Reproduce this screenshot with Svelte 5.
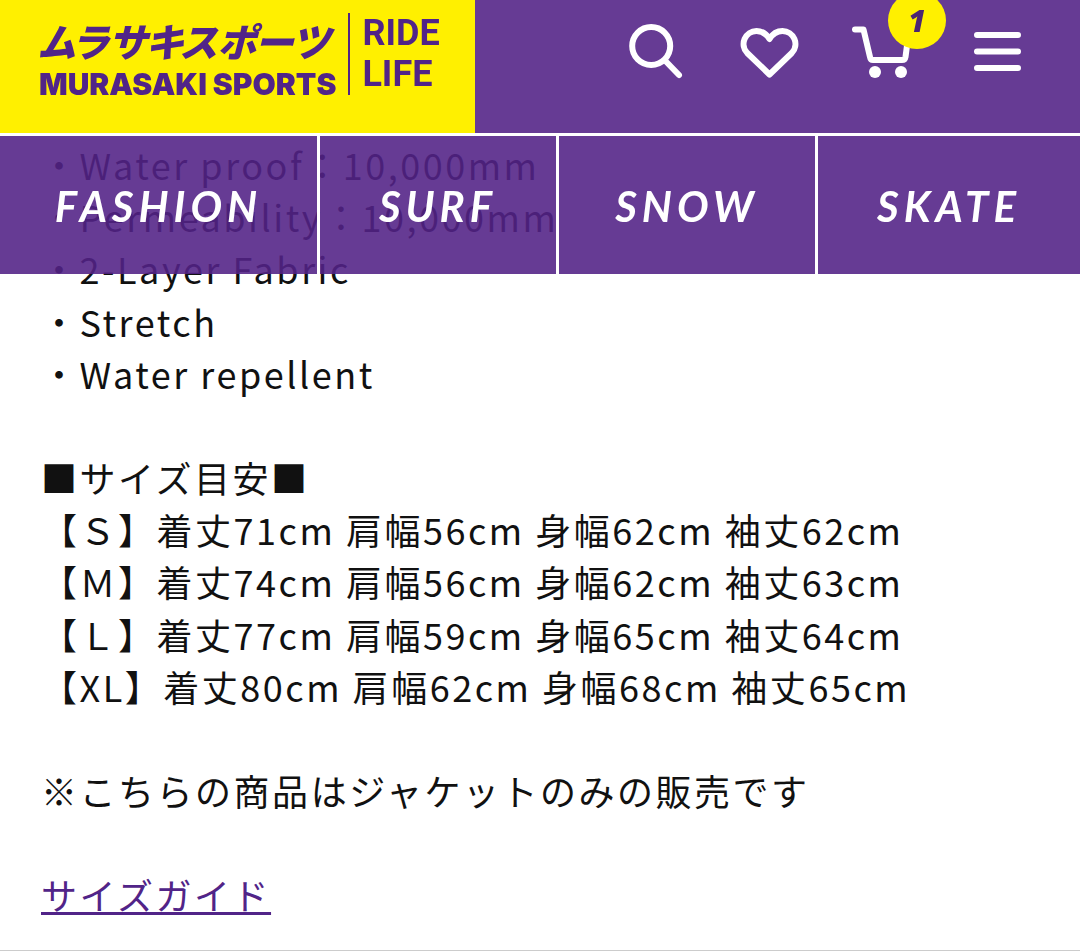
<script>
  const categories = ['FASHION', 'SURF', 'SNOW', 'SKATE'];
  const features = [
    'Water proof：10,000mm',
    'Permeability：10,000mm',
    '2-Layer Fabric',
    'Stretch',
    'Water repellent'
  ];
  const sizes = [
    '【Ｓ】着丈71cm 肩幅56cm 身幅62cm 袖丈62cm',
    '【Ｍ】着丈74cm 肩幅56cm 身幅62cm 袖丈63cm',
    '【Ｌ】着丈77cm 肩幅59cm 身幅65cm 袖丈64cm',
    '【XL】着丈80cm 肩幅62cm 身幅68cm 袖丈65cm'
  ];
  const cartCount = 1;
</script>

<header>
  <div class="bar">
    <a class="logo" href="#home">
      <span class="brand">
        <span class="kana">ムラサキスポーツ</span>
        <span class="latin">MURASAKI SPORTS</span>
      </span>
      <span class="slogan"><span>RIDE</span><span>LIFE</span></span>
    </a>
    <div class="tools">
      <button type="button" aria-label="Search">
        <svg viewBox="0 0 60 60"><circle cx="25.2" cy="24" r="19" /><path d="M39 38.500L53 53" /></svg>
      </button>
      <button type="button" aria-label="Favorites">
        <svg viewBox="0 0 60 60"><path d="M29.500 17C26.500 12 21.500 9 16.500 9A13 13 0 0 0 7.200 31L29.500 52.500L51.800 31A13 13 0 0 0 42.500 9C37.500 9 32.500 12 29.500 17Z" /></svg>
      </button>
      <button type="button" aria-label="Cart">
        <svg viewBox="0 0 60 60">
          <path d="M1 7.500H9.500L16 35Q16.500 38 19 38H48Q51 38 51.500 35L54 16" />
          <circle class="solid" cx="21" cy="50" r="6" /><circle class="solid" cx="47" cy="50" r="6" />
        </svg>
        <span class="badge">{cartCount}</span>
      </button>
      <button type="button" aria-label="Menu">
        <svg viewBox="0 0 60 60"><path d="M9 13H50M9 29.500H50M9 46H50" /></svg>
      </button>
    </div>
  </div>
  <nav>
    {#each categories as category}
      <a href="#{category.toLowerCase()}">{category}</a>
    {/each}
  </nav>
</header>

<main>
  <ul>
    {#each features as feature}
      <li>・{feature}</li>
    {/each}
  </ul>
  <section>
    <h2>■サイズ目安■</h2>
    {#each sizes as size}
      <p>{size}</p>
    {/each}
  </section>
  <p>※こちらの商品はジャケットのみの販売です</p>
  <p><a href="#size-guide">サイズガイド</a></p>
</main>

<style>
  :global(body) {
    margin: 0;
    background: #fff;
  }
  header {
    position: fixed;
    inset: 0 0 auto;
    z-index: 1;
  }
  .bar {
    display: flex;
    justify-content: space-between;
    height: 133px;
    background: #663b94;
    border-bottom: 3px solid #fff;
  }
  .logo {
    box-sizing: border-box;
    display: flex;
    gap: 12px;
    width: 44%;
    padding: 13px 0 38px 39px;
    background: #fff000;
    color: #512488;
    text-decoration: none;
    white-space: nowrap;
  }
  .brand {
    display: flex;
    flex-direction: column;
    justify-content: space-between;
  }
  .kana {
    font: italic 900 39px/54px "Noto Sans CJK JP", sans-serif;
    font-feature-settings: "palt";
  }
  .latin {
    font: 900 30px/22px Inter, sans-serif;
  }
  .slogan {
    display: flex;
    flex-direction: column;
    padding-left: 12px;
    border-left: 2px solid #512488;
    font: bold 36px/41px Roboto, sans-serif;
  }
  .tools {
    display: flex;
    gap: 54px;
    padding: 22px 52px 0 0;
  }
  button {
    position: relative;
    width: 60px;
    height: 60px;
    padding: 0;
    border: 0;
    background: none;
    cursor: pointer;
  }
  svg {
    display: block;
    width: 60px;
    height: 60px;
    overflow: visible;
    fill: none;
    stroke: #fff;
    stroke-width: 6;
    stroke-linecap: round;
    stroke-linejoin: round;
  }
  .solid {
    fill: #fff;
    stroke: none;
  }
  .badge {
    position: absolute;
    top: -30px;
    left: 34px;
    width: 58px;
    height: 57px;
    border-radius: 50%;
    background: #fff000;
    color: #4b2473;
    font: italic 800 30px/57px "Open Sans", sans-serif;
    text-align: center;
  }
  nav {
    display: grid;
    grid-template-columns: 317fr 239fr 259fr 265fr;
  }
  nav a {
    padding: 44px 0 42px;
    background: rgba(83, 35, 135, 0.89);
    color: #fff;
    font: italic bold 42px/52px Lato, sans-serif;
    letter-spacing: 5px;
    text-align: center;
    text-decoration: none;
  }
  nav a + a {
    border-left: 3px solid #fff;
  }
  main {
    padding: 138px 41px 30px;
    border-bottom: 1px solid #ccc;
    color: #111;
    font: 36px/1.45 "Noto Sans CJK JP", sans-serif;
    letter-spacing: 0.07em;
  }
  ul,
  h2,
  p {
    margin: 0;
    padding: 0;
    font: inherit;
    list-style: none;
  }
  section,
  section ~ p {
    margin-top: 52px;
  }
  main a {
    color: #512488;
    text-decoration-thickness: 3px;
  }
</style>
